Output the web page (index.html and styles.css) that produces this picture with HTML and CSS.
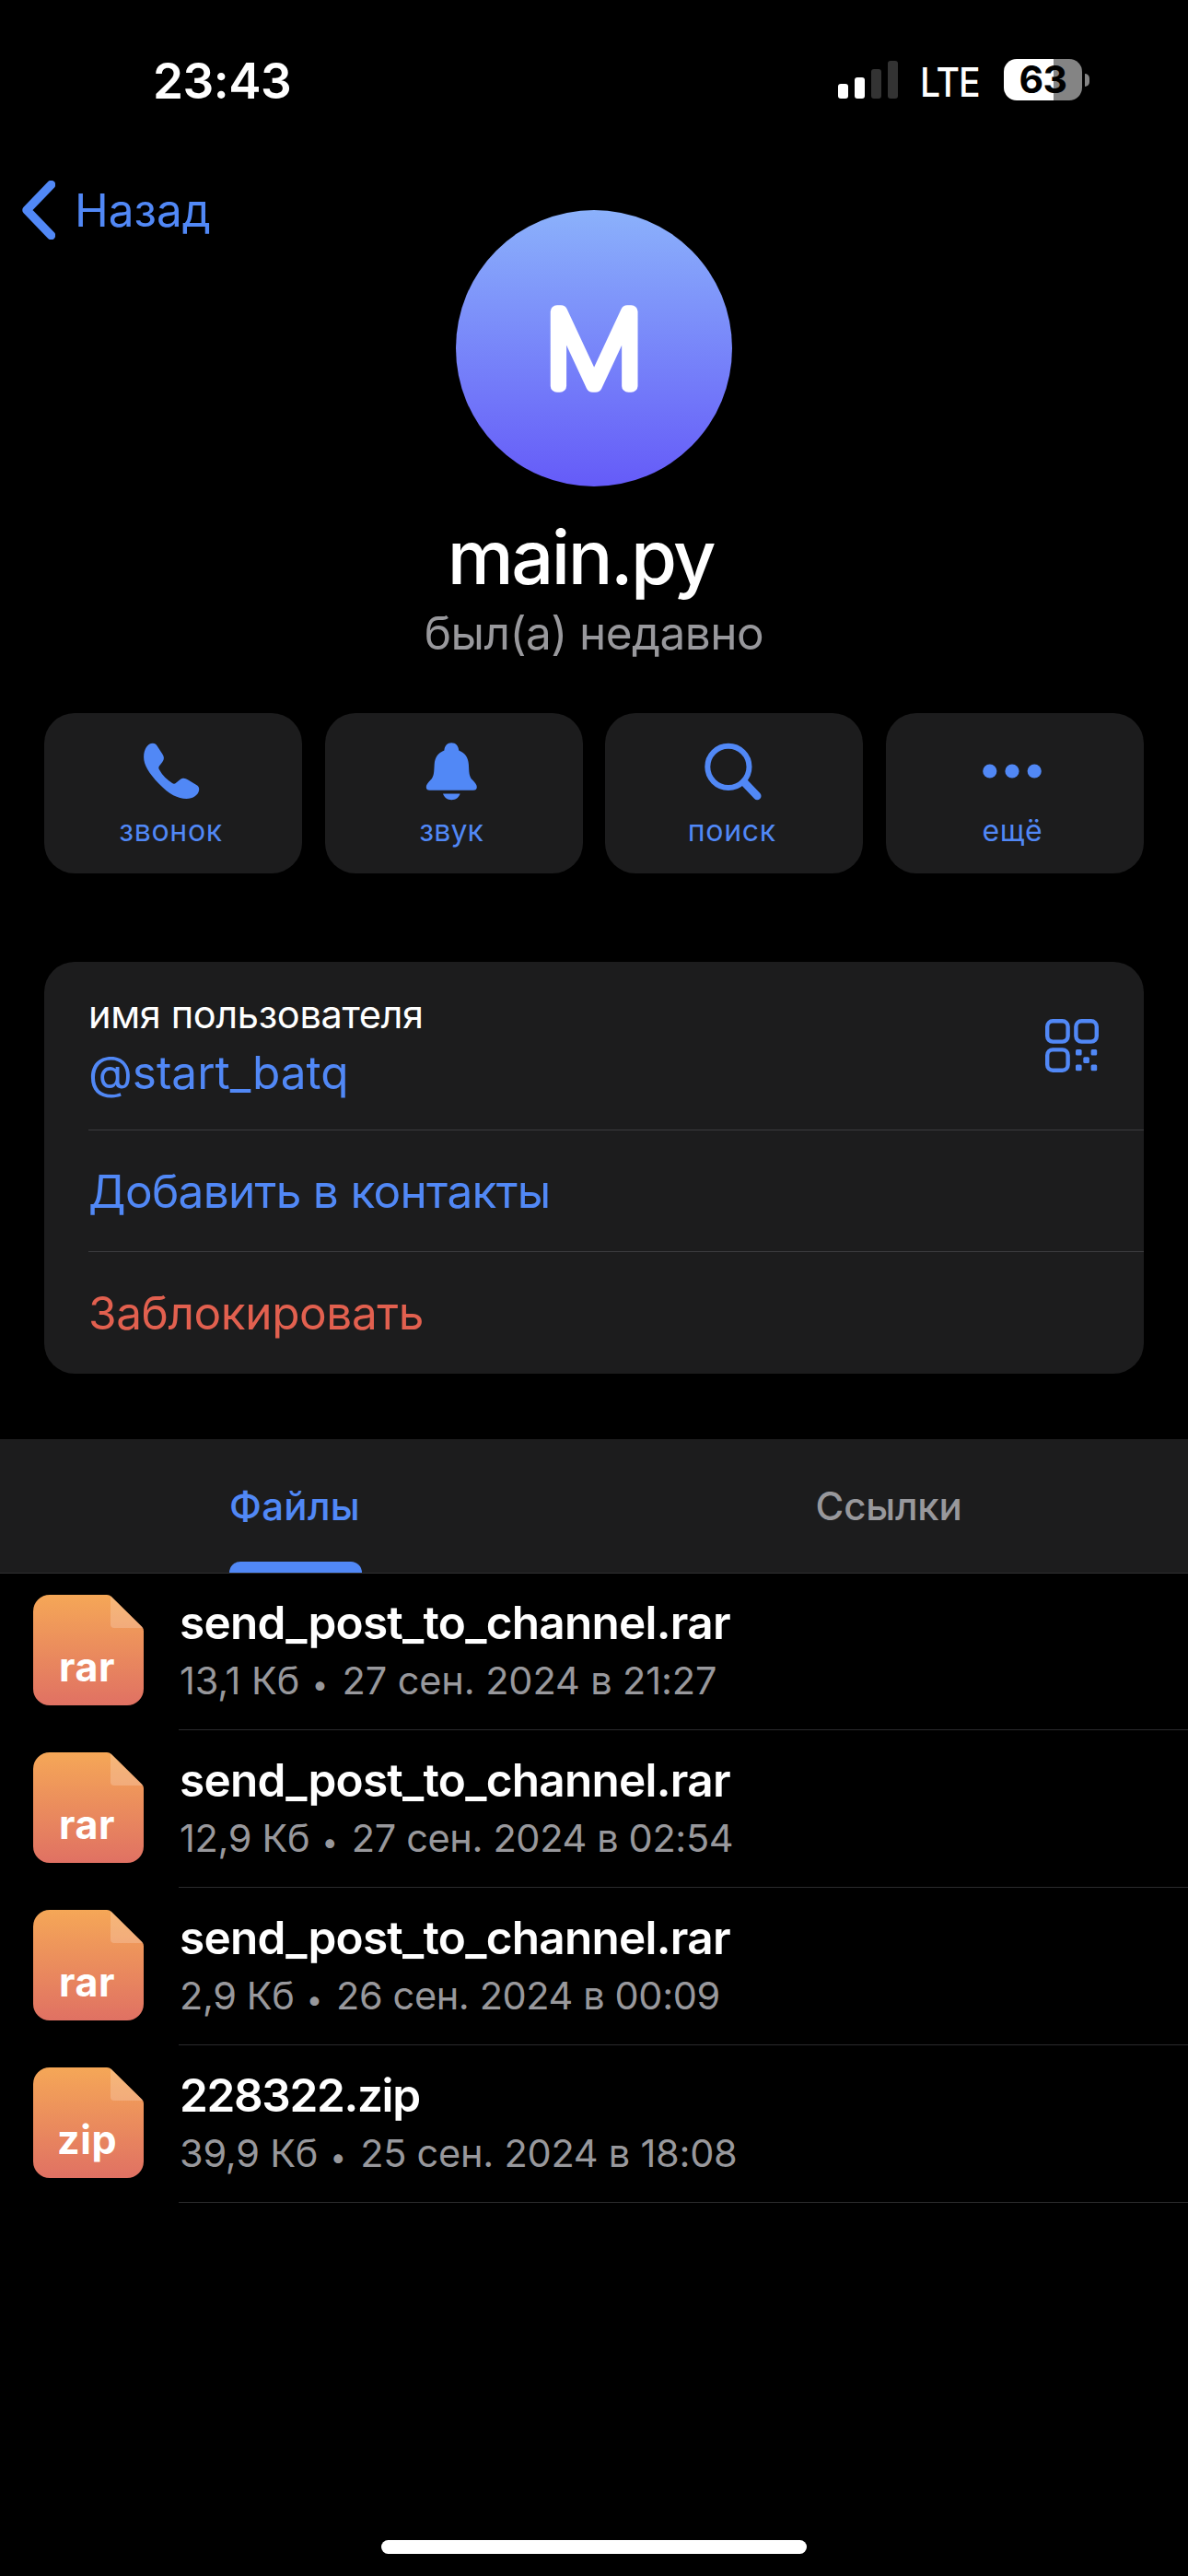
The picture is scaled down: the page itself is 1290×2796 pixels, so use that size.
FILE: index.html
```html
<!DOCTYPE html>
<html lang="ru">
<head>
  <meta charset="UTF-8">
  <meta name="viewport" content="width=device-width, initial-scale=1.0">
  <title>main.py</title>
  <link rel="stylesheet" href="styles.css">
</head>
<body>
  <div class="statusbar">
    <span class="time">23:43</span>
    <div class="status-icons">
      <svg class="signal" viewBox="0 0 65 41">
        <rect x="0" y="25" width="11" height="16" rx="3" fill="#fff"/>
        <rect x="18" y="18" width="11" height="23" rx="3" fill="#fff"/>
        <rect x="36" y="9" width="11" height="32" rx="3" fill="#333"/>
        <rect x="54" y="0" width="11" height="41" rx="3" fill="#333"/>
      </svg>
      <span class="network">LTE</span>
      <div class="battery">63</div>
      <div class="battery-tip"></div>
    </div>
  </div>

  <header>
    <a class="back">
      <svg viewBox="0 0 36 64"><path d="M31.5 4.5L5 32L31.5 59.5"/></svg>
      <span>Назад</span>
    </a>
    <svg class="avatar" viewBox="0 0 300 300">
      <defs>
        <linearGradient id="avatar-bg" x1="0" y1="0" x2="0" y2="1">
          <stop offset="0" stop-color="#8bb1fb"/>
          <stop offset="1" stop-color="#655bf8"/>
        </linearGradient>
      </defs>
      <circle cx="150" cy="150" r="150" fill="url(#avatar-bg)"/>
      <text transform="translate(150 190.5) scale(1.08 1)" text-anchor="middle">M</text>
    </svg>
  </header>

  <h1>main.py</h1>
  <p class="last-seen">был(а) недавно</p>

  <div class="actions">
    <button>
      <svg viewBox="-2.4 0 72 72"><path d="M3.7 20.7C3.7 12 8 5.7 13.5 5.7C16 5.7 17.6 7 18.8 9.5L24 17.5C26 20.5 26.2 23 23.8 26.2L20.5 30.5C19.6 32 19.8 33.2 20.8 34.8C24 40.5 29 45.5 34.6 49C36.2 50 37.4 49.9 39 48.5L43 45.3C46 43.2 48.6 43.4 51.5 45.3L60.5 50.8C63 52.3 64 53.6 63.8 56.3C63.2 62 57 66 50 66C41 66 31 61 20.5 50C9 38 3.7 29 3.7 20.7Z"/></svg>
      <span>звонок</span>
    </button>
    <button>
      <svg viewBox="0 0 72 72">
        <path d="M36.3 5.2C31.8 5.2 28.6 8.6 28.4 13.6C21.5 16.3 18.2 21.5 17.7 28.5C17.2 37 17.4 42 13.6 45.6C10.5 48.7 8.8 51.2 8.8 53.2C8.8 55.6 10.2 56.7 12.6 56.7H60C62.4 56.7 63.8 55.6 63.8 53.2C63.8 51.2 62.1 48.7 59 45.6C55.2 42 55.4 37 54.9 28.5C54.4 21.5 51.1 16.3 44.2 13.6C44 8.6 40.8 5.2 36.3 5.2Z"/>
        <path d="M27 60.5H45.6C44.2 64.6 40.8 67.2 36.3 67.2S28.4 64.6 27 60.5Z"/>
      </svg>
      <span class="tight">звук</span>
    </button>
    <button>
      <svg viewBox="0 0 72 72">
        <circle class="line" cx="31.9" cy="31.3" r="22.6"/>
        <path class="line handle" d="M49 48L63.3 63"/>
      </svg>
      <span>поиск</span>
    </button>
    <button>
      <svg viewBox="0 0 72 72">
        <circle cx="11.8" cy="36" r="7.6"/>
        <circle cx="36" cy="36" r="7.6"/>
        <circle cx="60.2" cy="36" r="7.6"/>
      </svg>
      <span>ещё</span>
    </button>
  </div>

  <section class="card">
    <div class="row user">
      <div>
        <div class="label">имя пользователя</div>
        <div class="username">@start_batq</div>
      </div>
      <svg class="qr" viewBox="0 0 58 58">
        <rect class="line" x="2.2" y="2.2" width="22.4" height="22.4" rx="6"/>
        <rect class="line" x="33.4" y="2.2" width="22.4" height="22.4" rx="6"/>
        <rect class="line" x="2.2" y="33.4" width="22.4" height="22.4" rx="6"/>
        <rect x="33" y="33" width="6.6" height="6.6" rx="1.5"/>
        <rect x="49.6" y="33" width="6.6" height="6.6" rx="1.5"/>
        <rect x="41.3" y="41.3" width="6.6" height="6.6" rx="1.5"/>
        <rect x="33" y="49.6" width="6.6" height="6.6" rx="1.5"/>
        <rect x="49.6" y="49.6" width="6.6" height="6.6" rx="1.5"/>
      </svg>
    </div>
    <div class="row add">Добавить в контакты</div>
    <div class="row block">Заблокировать</div>
  </section>

  <nav class="tabs">
    <div class="tab active">Файлы</div>
    <div class="tab">Ссылки</div>
  </nav>

  <main class="files" id="files"></main>

  <div class="home-indicator"></div>

  <script>
    const files = [
      { name: 'send_post_to_channel.rar', size: '13,1 Кб', date: '27 сен. 2024 в 21:27', spacing: -0.12 },
      { name: 'send_post_to_channel.rar', size: '12,9 Кб', date: '27 сен. 2024 в 02:54', spacing: -0.37 },
      { name: 'send_post_to_channel.rar', size: '2,9 Кб', date: '26 сен. 2024 в 00:09', spacing: -0.4 },
      { name: '228322.zip', size: '39,9 Кб', date: '25 сен. 2024 в 18:08', spacing: -0.25 }
    ];

    document.getElementById('files').innerHTML = files.map((file, i) => {
      const ext = file.name.split('.').pop();
      return `
        <div class="file ${ext}">
          <svg class="file-icon" viewBox="0 0 120 120">
            <defs>
              <linearGradient id="file-bg-${i}" x1="0" y1="0" x2="0" y2="1">
                <stop offset="0" stop-color="#f5a757"/>
                <stop offset="1" stop-color="#e07163"/>
              </linearGradient>
            </defs>
            <path d="M18 0H80Q83 0 85 2L118 34.5Q120 36.5 120 39.5V102A18 18 0 0 1 102 120H18A18 18 0 0 1 0 102V18A18 18 0 0 1 18 0Z" fill="url(#file-bg-${i})"/>
            <path d="M84 1L119.5 36H88Q84 36 84 32Z" fill="#fff" fill-opacity=".2"/>
            <text x="58.5" y="93.5" text-anchor="middle">${ext}</text>
          </svg>
          <div class="file-info">
            <div class="file-name">${file.name}</div>
            <div class="file-meta" style="letter-spacing: ${file.spacing}px">${file.size} <span class="dot">•</span> ${file.date}</div>
          </div>
        </div>`;
    }).join('');
  </script>
</body>
</html>
```
FILE: styles.css
```css
* {
  box-sizing: border-box;
}
body {
  display: flex;
  flex-direction: column;
  height: 2796px;
  margin: 0;
  background-color: #000;
  color: #fff;
  font-family: Inter, "Liberation Sans", sans-serif;
  font-size: 49.5px;
  line-height: 60px;
}
svg {
  display: block;
  flex-shrink: 0;
}

/* status bar */
.statusbar {
  display: flex;
  align-items: center;
  justify-content: space-between;
  height: 173px;
  padding: 0 107px 0 166px;
}
.time {
  padding-top: 2px;
  font-size: 53px;
  font-weight: 600;
  letter-spacing: -0.5px;
}
.status-icons {
  display: flex;
  align-items: center;
  width: 273px;
}
.signal {
  width: 65px;
  height: 41px;
}
.network {
  width: 91px;
  margin-left: 24px;
  padding-top: 5px;
  font-size: 44px;
  font-weight: 500;
  letter-spacing: -1.2px;
  transform: scaleX(0.89);
  transform-origin: left;
}
.battery {
  width: 85px;
  height: 45px;
  border-radius: 14px;
  background: linear-gradient(to right, #fff 54px, #848484 54px);
  color: #000;
  font-size: 41px;
  font-weight: 700;
  line-height: 45px;
  letter-spacing: -0.6px;
  text-align: center;
}
.battery-tip {
  width: 5px;
  height: 14px;
  margin-left: 3px;
  border-radius: 0 7px 7px 0;
  background-color: #848484;
}

/* profile */
header {
  display: grid;
  grid-template-columns: 1fr 300px 1fr;
}
.back {
  display: flex;
  align-items: center;
  gap: 21px;
  height: 109px;
  padding-left: 24px;
  color: #5188f6;
}
.back svg {
  width: 36px;
  height: 64px;
  fill: none;
  stroke: #5188f6;
  stroke-width: 9.5;
  stroke-linecap: round;
  stroke-linejoin: round;
}
.avatar {
  width: 300px;
  height: 300px;
  margin-top: 55px;
}
.avatar text {
  fill: #fff;
  stroke: #fff;
  stroke-width: 13.5;
  stroke-linejoin: round;
  font-size: 111px;
  font-weight: 100;
}
h1 {
  margin: 27px 0 0;
  padding-right: 29px;
  font-size: 81px;
  font-weight: 540;
  line-height: 100px;
  letter-spacing: -2.5px;
  text-align: center;
}
.last-seen {
  margin: 2px 0 57px;
  color: #98989c;
  letter-spacing: -0.55px;
  text-align: center;
}
.actions {
  display: grid;
  grid-template-columns: repeat(4, 1fr);
  gap: 24.6px;
  margin: 0 48px 96px;
}
.actions button {
  display: flex;
  flex-direction: column;
  align-items: center;
  gap: 9px;
  height: 174px;
  padding: 27px 5px 0 0;
  border: none;
  border-radius: 33px;
  background-color: #1c1c1d;
  color: #5188f6;
  font-family: inherit;
  font-size: 32px;
  line-height: 40px;
  letter-spacing: 0.7px;
}
.actions svg {
  width: 72px;
  height: 72px;
  fill: #5188f6;
}
.actions .line {
  fill: none;
  stroke: #5188f6;
  stroke-width: 6;
  stroke-linecap: round;
}
.actions .handle {
  stroke-width: 8.5;
}
.tight {
  letter-spacing: 0.1px;
}

/* contact card */
.card {
  margin: 0 48px 71px;
  padding-left: 48px;
  border-radius: 33px;
  background-color: #1c1c1d;
}
.row {
  display: flex;
  align-items: center;
  height: 132px;
  border-bottom: 1px solid #3c3c3f;
}
.row:last-child {
  border-bottom: none;
}
.user {
  justify-content: space-between;
  height: 183px;
  padding-right: 49px;
}
.label {
  margin-bottom: 8px;
  font-size: 41.5px;
  line-height: 50px;
  letter-spacing: -0.35px;
}
.username,
.add {
  color: #5188f6;
}
.add {
  letter-spacing: -0.68px;
}
.block {
  color: #e2604f;
  letter-spacing: -0.4px;
}
.qr {
  width: 58px;
  height: 58px;
  fill: #5188f6;
}
.qr .line {
  fill: none;
  stroke: #5188f6;
  stroke-width: 4.4;
}

/* tabs */
.tabs {
  display: grid;
  grid-template-columns: 1fr 1fr;
  height: 146px;
  border-bottom: 1px solid #2f2f31;
  background-color: #1c1c1d;
}
.tab {
  position: relative;
  display: flex;
  align-items: center;
  justify-content: center;
  padding-right: 5px;
  color: #98989c;
  font-size: 42px;
  font-weight: 500;
  letter-spacing: -0.2px;
}
.active {
  color: #5188f6;
  letter-spacing: 0.3px;
}
.active::after {
  content: "";
  position: absolute;
  bottom: 0;
  left: 249px;
  width: 144px;
  height: 12px;
  border-radius: 12px 12px 0 0;
  background-color: #5188f6;
}

/* shared files */
.file {
  display: flex;
  gap: 38px;
  height: 171px;
  padding: 24px 0 0 36px;
}
.file:first-child {
  height: 170px;
  padding-top: 23px;
}
.file-icon {
  width: 120px;
  height: 120px;
}
.file-icon text {
  fill: #fff;
  font-size: 43px;
  font-weight: 700;
  letter-spacing: 0.6px;
}
.file-info {
  flex: 1;
  padding-left: 1px;
  border-bottom: 1px solid #2b2b2d;
}
.file-name {
  font-weight: 600;
  letter-spacing: -0.75px;
}
.zip .file-name {
  letter-spacing: -1.35px;
}
.file-meta {
  margin-top: 8px;
  color: #98989c;
  font-size: 41.5px;
  line-height: 50px;
}
.dot {
  margin: 0 4px 0 2px;
  font-size: 31px;
  line-height: 1;
}
.home-indicator {
  width: 462px;
  height: 15px;
  margin: auto auto 24px;
  border-radius: 8px;
  background-color: #fff;
}
```
